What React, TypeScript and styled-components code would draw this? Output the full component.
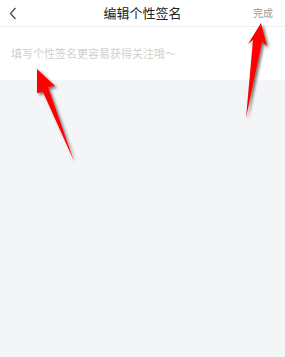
import React from "react";
import styled, { createGlobalStyle } from "styled-components";

const Global = createGlobalStyle`
  html, body { margin: 0; padding: 0; }
  body {
    background: #f4f5f7;
    font-family: "Noto Sans CJK SC", "Noto Sans", sans-serif;
  }
`;

const Page = styled.div`
  position: relative;
  width: 285px;
  height: 357px;
  background: #f4f5f7;
  overflow: hidden;
`;

const Header = styled.header`
  height: 26px;
  display: grid;
  grid-template-columns: 50px 1fr 50px;
  align-items: center;
  background: #fff;
  border-bottom: 1px solid #efefef;
`;

const BackButton = styled.button`
  justify-self: start;
  margin-left: 8px;
  width: 10px;
  height: 14px;
  padding: 0;
  border: none;
  background: none;
  display: flex;
  align-items: center;
  justify-content: center;
`;

const Title = styled.h1`
  margin: 0;
  text-align: center;
  font-size: 13px;
  font-weight: 400;
  color: #222;
  letter-spacing: 0;
  line-height: 26px;
`;

const Done = styled.span`
  justify-self: end;
  margin-right: 12px;
  font-size: 10px;
  color: #9a9a9a;
  line-height: 26px;
`;

const Editor = styled.div`
  height: 53px;
  background: #fff;
  padding: 18px 11px 0;
  box-sizing: border-box;
`;

const Placeholder = styled.div`
  font-size: 11px;
  line-height: 16px;
  color: #cfcfcf;
  white-space: nowrap;
`;

const Overlay = styled.svg`
  position: absolute;
  left: 0;
  top: 0;
  pointer-events: none;
`;

export default function App() {
  return (
    <>
      <Global />
      <Page>
        <Header>
          <BackButton aria-label="back">
            <svg width="8" height="13" viewBox="0 0 8 13">
              <path d="M6.5 1 L1.5 6.5 L6.5 12" fill="none" stroke="#444" strokeWidth="1.2" />
            </svg>
          </BackButton>
          <Title>编辑个性签名</Title>
          <Done>完成</Done>
        </Header>
        <Editor>
          <Placeholder>填写个性签名更容易获得关注哦～</Placeholder>
        </Editor>
        <Overlay width="285" height="357" viewBox="0 0 285 357">
          <defs>
            <filter id="sh" x="-50%" y="-50%" width="200%" height="200%">
              <feDropShadow dx="2" dy="2" stdDeviation="1.6" floodColor="#000" floodOpacity="0.55" />
            </filter>
          </defs>
          <polygon
            points="37,69 55,86 48,87 74,161 43,92 37,93"
            fill="#ff0000"
            filter="url(#sh)"
          />
          <polygon
            points="261,23 267,46 262,42 246,118 253,40 248,44"
            fill="#ff0000"
            filter="url(#sh)"
          />
        </Overlay>
      </Page>
    </>
  );
}
